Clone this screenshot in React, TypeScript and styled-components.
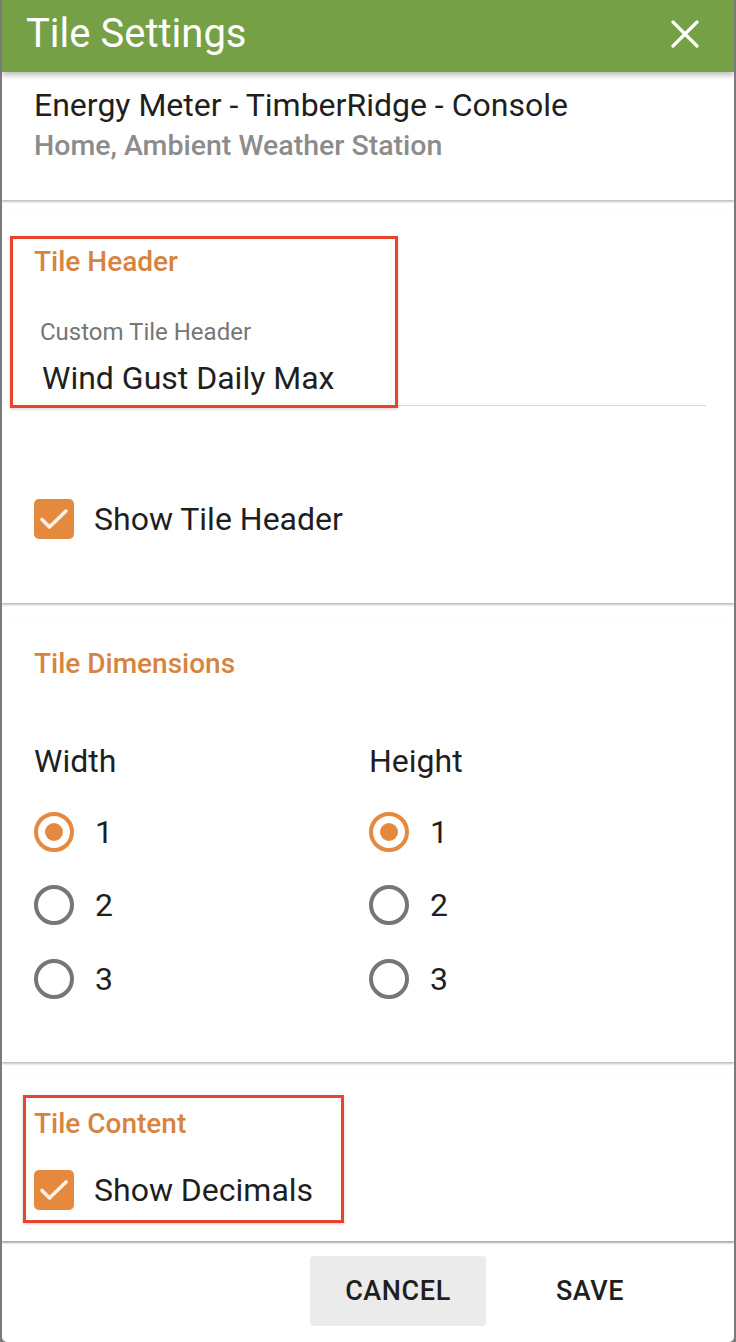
import React, { useState } from "react";
import styled, { createGlobalStyle } from "styled-components";

const GlobalStyle = createGlobalStyle`
  html, body {
    margin: 0;
    padding: 0;
    background: #7b7b7b;
    font-family: Roboto, "Liberation Sans", Arial, sans-serif;
  }
  * { box-sizing: border-box; }
`;

const ORANGE = "#e5893f";
const TITLE_ORANGE = "#d6843f";

const Dialog = styled.div`
  margin: 0 2px;
  width: 732px;
  height: 1342px;
  background: #fff;
  border-radius: 0 0 5px 5px;
  overflow: hidden;
  display: flex;
  flex-direction: column;
`;

const Header = styled.div`
  position: relative;
  z-index: 2;
  height: 72px;
  flex-shrink: 0;
  background: #76a046;
  display: flex;
  align-items: center;
  justify-content: space-between;
  padding: 0 34px 4px 24px;
  box-shadow: 0 3px 6px rgba(0, 0, 0, 0.28);
`;

const Title = styled.h1`
  margin: 0;
  font-size: 40px;
  line-height: 44px;
  font-weight: 400;
  color: #fff;
`;

const CloseButton = styled.button`
  border: none;
  background: transparent;
  padding: 0;
  width: 30px;
  height: 30px;
  display: flex;
  align-items: center;
  justify-content: center;
  cursor: pointer;
`;

const Body = styled.div`
  flex: 1;
  display: flex;
  flex-direction: column;
  gap: 15px;
`;

const Card = styled.section<{ $top: number; $bottom: number; $grow?: boolean }>`
  position: relative;
  background: #fff;
  padding: ${(p) => p.$top}px 30px ${(p) => p.$bottom}px 32px;
  flex: ${(p) => (p.$grow ? 1 : "none")};
  box-shadow: 0 2px 2px rgba(0, 0, 0, 0.24), 0 0 1px rgba(0, 0, 0, 0.1);
`;

const DeviceName = styled.div`
  font-size: 32px;
  line-height: 36px;
  color: #1f1f1f;
`;

const DeviceLocation = styled.div`
  margin-top: 7px;
  font-size: 28.5px;
  line-height: 32px;
  font-weight: 500;
  color: #8c8c8c;
`;

const SectionTitle = styled.h2`
  margin: 0;
  font-size: 28px;
  line-height: 32px;
  font-weight: 500;
  color: ${TITLE_ORANGE};
`;

const Field = styled.div`
  margin-top: 40px;
  width: 672px;
  border-bottom: 1px solid #d6d6d6;
  padding-bottom: 9px;
`;

const FieldLabel = styled.div`
  padding-left: 6px;
  font-size: 24px;
  line-height: 28px;
  color: #767676;
`;

const FieldValue = styled.div`
  margin-top: 14px;
  padding-left: 8px;
  font-size: 32px;
  line-height: 36px;
  color: #1f1f1f;
`;

const CheckRow = styled.label<{ $mt: number }>`
  margin-top: ${(p) => p.$mt}px;
  height: 40px;
  display: flex;
  align-items: center;
  gap: 20px;
  font-size: 32px;
  color: #1f1f1f;
  cursor: pointer;
`;

const CheckBox = styled.span`
  width: 40px;
  height: 40px;
  border-radius: 5px;
  background: ${ORANGE};
  display: flex;
  align-items: center;
  justify-content: center;
  flex-shrink: 0;
`;

const DimGrid = styled.div`
  margin-top: 63px;
  display: grid;
  grid-template-columns: 335px 1fr;
`;

const DimLabel = styled.div`
  font-size: 32px;
  line-height: 36px;
  color: #1f1f1f;
  margin-bottom: 16px;
`;

const RadioRow = styled.label`
  height: 73.5px;
  display: flex;
  align-items: center;
  gap: 21px;
  font-size: 32px;
  color: #1f1f1f;
  cursor: pointer;
`;

const RadioCircle = styled.span<{ $on: boolean }>`
  width: 40px;
  height: 40px;
  border-radius: 50%;
  border: 4px solid ${(p) => (p.$on ? ORANGE : "#767676")};
  display: flex;
  align-items: center;
  justify-content: center;
  flex-shrink: 0;

  &::after {
    content: "";
    width: 18px;
    height: 18px;
    border-radius: 50%;
    background: ${ORANGE};
    display: ${(p) => (p.$on ? "block" : "none")};
  }
`;

const Highlight = styled.div<{ $top: number; $left: number; $w: number; $h: number }>`
  position: absolute;
  top: ${(p) => p.$top}px;
  left: ${(p) => p.$left}px;
  width: ${(p) => p.$w}px;
  height: ${(p) => p.$h}px;
  border: 3px solid #e8442d;
  box-shadow: 0 1px 3px rgba(0, 0, 0, 0.2);
  pointer-events: none;
`;

const Footer = styled.div`
  flex-shrink: 0;
  height: 101px;
  border-top: 2px solid #e4e4e4;
  display: flex;
  justify-content: flex-end;
  align-items: flex-start;
  gap: 16px;
  padding: 13px 56px 0 0;
`;

const ActionButton = styled.button<{ $filled?: boolean }>`
  width: 176px;
  height: 70px;
  border: none;
  border-radius: 4px;
  background: ${(p) => (p.$filled ? "#ebebeb" : "transparent")};
  font-family: Roboto, "Liberation Sans", Arial, sans-serif;
  font-size: 27px;
  font-weight: 500;
  letter-spacing: 0.6px;
  color: #1f1f1f;
  cursor: pointer;
`;

const Check = () => (
  <svg width="30" height="30" viewBox="0 0 30 30">
    <path d="M3 15.5 L10.5 23 L27 7" fill="none" stroke="#fdf0e4" strokeWidth="3.6" strokeLinecap="round" strokeLinejoin="round" />
  </svg>
);

const options = [1, 2, 3];

export default function App() {
  const [width, setWidth] = useState(1);
  const [height, setHeight] = useState(1);

  return (
    <>
      <GlobalStyle />
      <Dialog>
        <Header>
          <Title>Tile Settings</Title>
          <CloseButton aria-label="close">
            <svg width="28" height="28" viewBox="0 0 28 28">
              <path d="M2 2 L26 26 M26 2 L2 26" stroke="#fff" strokeWidth="3.2" strokeLinecap="round" />
            </svg>
          </CloseButton>
        </Header>
        <Body>
          <Card $top={15} $bottom={38}>
            <DeviceName>Energy Meter - TimberRidge - Console</DeviceName>
            <DeviceLocation>Home, Ambient Weather Station</DeviceLocation>
          </Card>

          <Card $top={31} $bottom={64}>
            <SectionTitle>Tile Header</SectionTitle>
            <Field>
              <FieldLabel>Custom Tile Header</FieldLabel>
              <FieldValue>Wind Gust Daily Max</FieldValue>
            </Field>
            <CheckRow $mt={93}>
              <CheckBox>
                <Check />
              </CheckBox>
              Show Tile Header
            </CheckRow>
            <Highlight $top={21} $left={8} $w={388} $h={172} />
          </Card>

          <Card $top={30} $bottom={46}>
            <SectionTitle>Tile Dimensions</SectionTitle>
            <DimGrid>
              <div>
                <DimLabel>Width</DimLabel>
                {options.map((n) => (
                  <RadioRow key={n} onClick={() => setWidth(n)}>
                    <RadioCircle $on={width === n} />
                    {n}
                  </RadioRow>
                ))}
              </div>
              <div>
                <DimLabel>Height</DimLabel>
                {options.map((n) => (
                  <RadioRow key={n} onClick={() => setHeight(n)}>
                    <RadioCircle $on={height === n} />
                    {n}
                  </RadioRow>
                ))}
              </div>
            </DimGrid>
          </Card>

          <Card $top={31} $bottom={31} $grow>
            <SectionTitle>Tile Content</SectionTitle>
            <CheckRow $mt={30}>
              <CheckBox>
                <Check />
              </CheckBox>
              Show Decimals
            </CheckRow>
            <Highlight $top={18} $left={21} $w={321} $h={128} />
          </Card>
        </Body>
        <Footer>
          <ActionButton $filled>CANCEL</ActionButton>
          <ActionButton>SAVE</ActionButton>
        </Footer>
      </Dialog>
    </>
  );
}
